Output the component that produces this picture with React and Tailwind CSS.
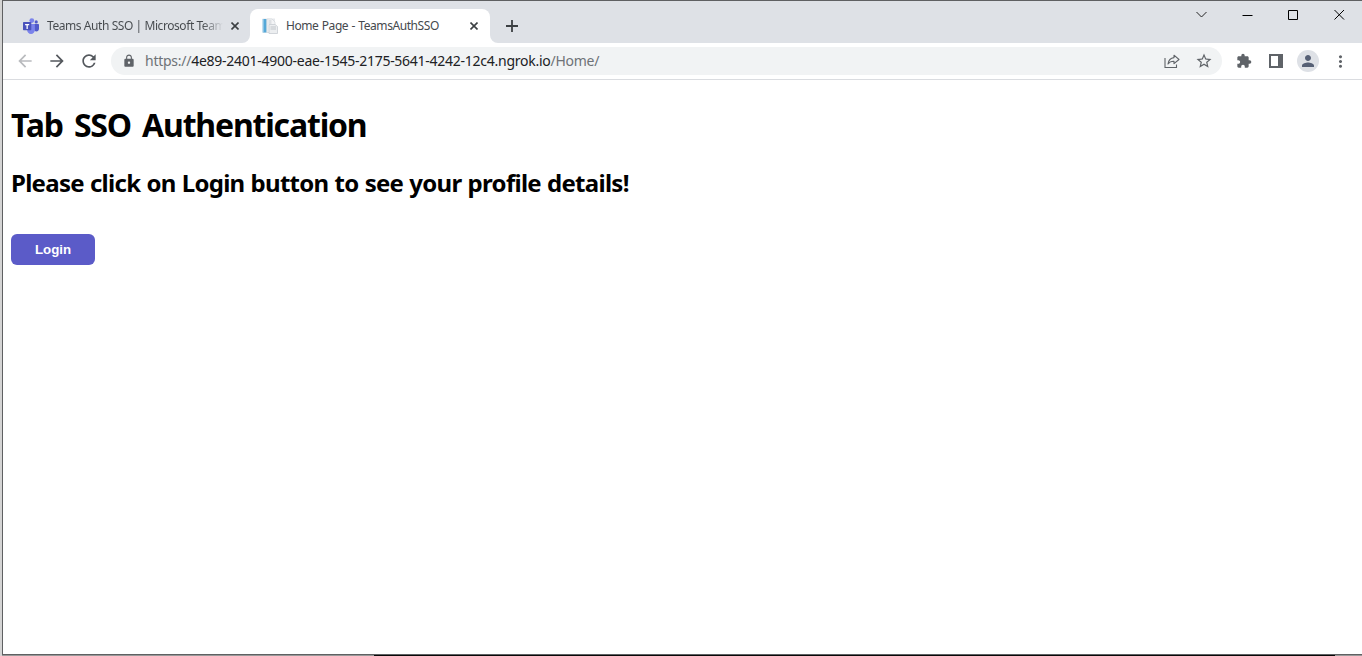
import React from "react";
import {
  MdArrowBack,
  MdArrowForward,
  MdRefresh,
  MdLock,
  MdStarBorder,
  MdExtension,
  MdPerson,
  MdMoreVert,
} from "react-icons/md";

function TeamsIcon() {
  return (
    <svg className="h-4 w-4 shrink-0" viewBox="0 0 16 16">
      <circle cx="13.200" cy="3.900" r="1.600" fill="#5059c9" />
      <circle cx="8.800" cy="2.600" r="2.400" fill="#7b83eb" />
      <path d="M11 6h4.400c.3 0 .6.3.6.6v4.200c0 1.600-1.200 2.700-2.600 2.700S11 12.400 11 11z" fill="#5059c9" />
      <path d="M4.500 6h6.700c.4 0 .7.300.7.700v5.100c0 2.400-1.700 4.200-3.900 4.200s-3.900-1.800-3.900-4.200z" fill="#7b83eb" />
      <rect x="0" y="4" width="8.300" height="8.300" rx="0.700" fill="#4b53bc" />
      <path d="M2.100 6h4.100v1.200H4.800v3.700H3.500V7.200H2.100z" fill="#fff" />
    </svg>
  );
}

function PageIcon() {
  return (
    <svg className="h-4 w-4 shrink-0" viewBox="0 0 16 16">
      <path d="M.5.5h12.500v14.500H.5z" fill="#e6e9ec" />
      <path d="M1 1h3.500v13.500H1z" fill="#55a8d8" />
      <path d="M0 1h1.500v13.500H0z" fill="#c3dff0" />
      <path d="M5 1h5l3 3v10.500H5z" fill="#f3f4f6" stroke="#d3d7db" strokeWidth="0.700" />
      <path d="M6.500 3h3M6.500 5h3" stroke="#c9cdd2" />
      <path d="M7 6.500h6l2.500 2v7H7z" fill="#eceef0" stroke="#c8cdd2" strokeWidth="0.800" />
      <path d="M8.500 9h5.500M8.500 11h5.500" stroke="#c0c5ca" />
    </svg>
  );
}

function CloseIcon() {
  return (
    <svg className="h-2 w-2 shrink-0" viewBox="0 0 8 8">
      <path d="M.5.5l7 7M7.500.5l-7 7" stroke="#3c4043" strokeWidth="1.600" />
    </svg>
  );
}

function TabStrip() {
  return (
    <div className="flex h-[42px] bg-[#dee1e6] pl-5 pt-2">
      <div className="flex h-[34px] w-[227px] items-center">
        <TeamsIcon />
        <span className="ml-2 w-[176px] whitespace-nowrap bg-gradient-to-r from-[#45494d] from-88% to-[#dee1e6] bg-clip-text text-[12px] leading-4 tracking-[-0.43px] text-transparent">
          Teams Auth SSO | Microsoft Team
        </span>
        <span className="ml-2 flex">
          <CloseIcon />
        </span>
      </div>
      <div className="relative flex h-[34px] w-[240px] items-center rounded-t-lg bg-white pl-3">
        <svg className="absolute -left-2 bottom-0 h-2 w-2" viewBox="0 0 8 8">
          <path d="M8 0v8H0a8 8 0 0 0 8-8z" fill="#fff" />
        </svg>
        <svg className="absolute -right-2 bottom-0 h-2 w-2" viewBox="0 0 8 8">
          <path d="M0 0v8h8a8 8 0 0 1-8-8z" fill="#fff" />
        </svg>
        <PageIcon />
        <span className="ml-2 w-[176px] whitespace-nowrap text-[12px] leading-4 tracking-[-0.42px] [word-spacing:0.6px] text-[#45494d]">
          Home Page - TeamsAuthSSO
        </span>
        <span className="ml-2 flex">
          <CloseIcon />
        </span>
      </div>
      <svg className="ml-4 mt-[11px] h-3 w-3" viewBox="0 0 12 12">
        <path d="M6 0v12M0 6h12" stroke="#3c4043" strokeWidth="1.800" />
      </svg>
      <div className="ml-auto mr-[17px] flex h-[11px] items-center gap-[35px]">
        <svg className="h-[11px] w-[11px]" viewBox="0 0 11 11">
          <path d="M.5 3l5 5 5-5" fill="none" stroke="#222" />
        </svg>
        <svg className="h-[11px] w-[11px]" viewBox="0 0 11 11">
          <path d="M.5 6.500h10" stroke="#000" />
        </svg>
        <svg className="h-[11px] w-[11px]" viewBox="0 0 11 11">
          <path d="M.5 1.500h9v9h-9z" fill="none" stroke="#000" />
        </svg>
        <svg className="h-[11px] w-[11px]" viewBox="0 0 11 11">
          <path d="M.5 1l9.500 9.500M10 1L.5 10.500" stroke="#000" />
        </svg>
      </div>
    </div>
  );
}

function Toolbar() {
  return (
    <div className="flex h-[37px] items-center border-b border-[#dadce0] bg-white pl-3">
      <MdArrowBack className="h-5 w-5 text-[#b9bbbe]" />
      <MdArrowForward className="ml-3 h-5 w-5 text-[#54585d]" />
      <MdRefresh className="ml-3 h-5 w-5 text-[#54585d]" />
      <div className="ml-3 flex h-7 w-[1111px] items-center rounded-full bg-[#f1f3f4] pl-[11px] pr-[9px]">
        <MdLock className="h-[14px] w-[14px] text-[#5f6368]" />
        <span className="ml-[9px] whitespace-nowrap text-[14px] leading-5 tracking-[-0.26px] text-[#6e7277]">
          https://
          <span className="text-[#202124]">4e89-2401-4900-eae-1545-2175-5641-4242-12c4.ngrok.io</span>
          /Home/
        </span>
        <svg className="ml-auto h-4 w-4" viewBox="0 0 16 16">
          <path d="M1 5v9.500h11.500v-3" fill="none" stroke="#5f6368" strokeWidth="1.100" />
          <path d="M10 2.200l5 4.300-5 4.200V8.300C7.500 8.200 5.500 9 4 11c.5-3.500 2.500-6 6-6.400z" fill="none" stroke="#5f6368" strokeWidth="1.100" strokeLinejoin="round" />
        </svg>
        <MdStarBorder className="ml-[15px] h-[18px] w-[18px] text-[#5f6368]" />
      </div>
      <MdExtension className="ml-[14px] h-4 w-4 text-[#5f6368]" />
      <svg className="ml-[17px] h-[14px] w-[14px]" viewBox="0 0 14 14">
        <path d="M1 1h12v12H1z" fill="#fff" stroke="#5f6368" strokeWidth="2" />
        <path d="M9 0h5v14H9z" fill="#5f6368" />
      </svg>
      <div className="ml-[14px] flex h-[22px] w-[22px] items-center justify-center rounded-full bg-[#dee1e6]">
        <MdPerson className="h-[18px] w-[18px] text-[#566075]" />
      </div>
      <MdMoreVert className="ml-3 h-[19px] w-[19px] text-[#5f6368]" />
    </div>
  );
}

export default function App() {
  return (
    <div className="flex h-[656px] w-[1362px] flex-col overflow-hidden bg-[#d4d4d4] pl-[2px] font-['Noto_Sans','Open_Sans',sans-serif]">
      <div className="flex h-[655px] flex-col border-y border-l border-[#5f6062] bg-white">
        <TabStrip />
        <Toolbar />
        <main className="flex flex-col items-start px-2 text-black">
          <h1 className="mt-[23px] whitespace-nowrap text-[32px] font-bold leading-[43px] tracking-[-1.18px] [word-spacing:4px]">
            Tab SSO Authentication
          </h1>
          <h2 className="mt-[21px] whitespace-nowrap text-[24px] font-bold leading-8 tracking-[-0.72px] [word-spacing:0.6px]">
            Please click on Login button to see your profile details!
          </h2>
          <button className="mt-[35px] flex h-[31px] w-[84px] items-center justify-center rounded-md bg-[#5b5bc8] font-['Liberation_Sans',sans-serif] text-[13.3px] font-bold text-white">
            Login
          </button>
        </main>
      </div>
      <div className="flex h-px">
        <div className="w-[372px] bg-[#999]" />
        <div className="w-[961px] bg-[#080808]" />
        <div className="flex-1 bg-[#999]" />
      </div>
    </div>
  );
}
